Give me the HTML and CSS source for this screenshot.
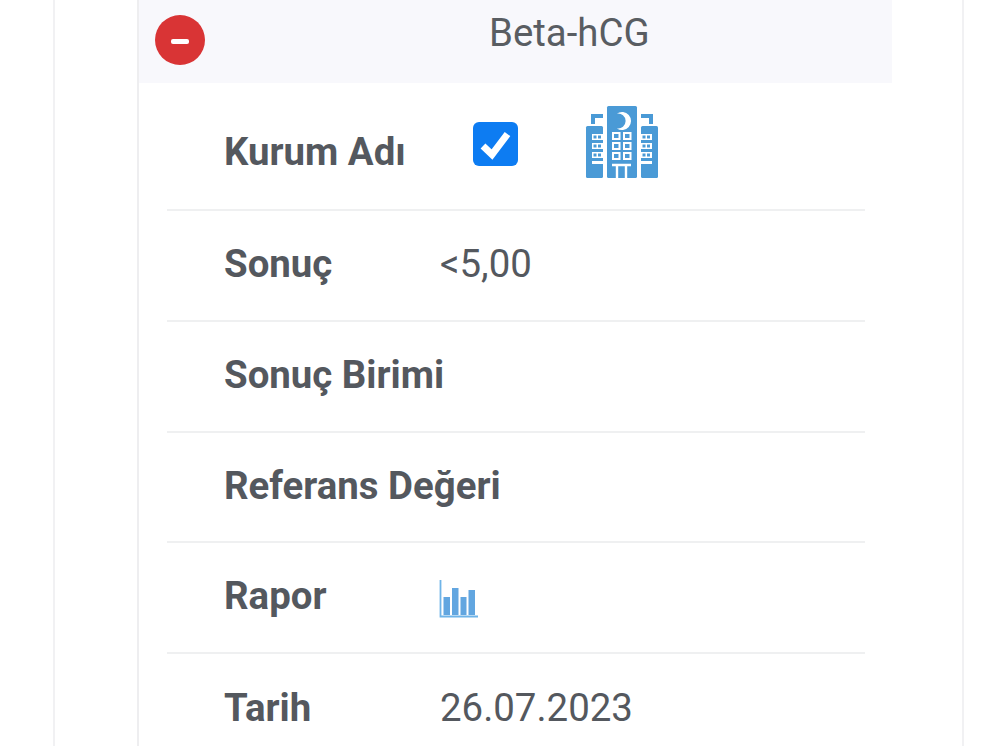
FILE: index.html
```html
<!DOCTYPE html>
<html lang="tr">
<head>
<meta charset="utf-8">
<title>Beta-hCG</title>
<link rel="stylesheet" href="styles.css">
</head>
<body>
<main class="page">
  <section class="card">
    <header class="card-head">
      <span class="collapse" aria-hidden="true"><span class="minus"></span></span>
      <h1 class="title">Beta-hCG</h1>
    </header>
    <div class="rows">
      <div class="row row-first">
        <span class="label label-first">Kurum Adı</span>
        <span class="check">
          <svg viewBox="0 0 44 44" width="44" height="44"><path d="M10 24l9 8.500L34.500 12" fill="none" stroke="#fff" stroke-width="7"/></svg>
        </span>
        <svg class="hospital" viewBox="0 0 73 73" width="73" height="73">
          <g fill="#4a9ad6">
            <rect x="22" y="0" width="30" height="72" rx="1.500"/>
            <rect x="1" y="20" width="17" height="52" rx="1.500"/>
            <rect x="56" y="20" width="17" height="52" rx="1.500"/>
            <path d="M6 18V8h12v4H10v6zM68 18V8H56v4h8v6z"/>
          </g>
          <path d="M31.900 7.600A9 9 0 1 1 31.900 22.400A7.500 7.500 0 1 0 31.900 7.600z" fill="#fff"/>
          <g fill="none" stroke="#fff" stroke-width="2">
            <rect x="28" y="27" width="6.500" height="6"/><rect x="39" y="27" width="6.500" height="6"/>
            <rect x="28" y="37" width="6.500" height="6"/><rect x="39" y="37" width="6.500" height="6"/>
            <rect x="28" y="47" width="6.500" height="6"/><rect x="39" y="47" width="6.500" height="6"/>
            <path d="M27 59h19M32 59v13M41 59v13" stroke-width="2.400"/>
          </g>
          <g fill="#fff">
            <path d="M7 28h11v6H7zM7 37h11v6H7zM7 46h11v6H7zM7 55h11v3H7z"/>
            <path d="M56 28h11v6H56zM56 37h11v6H56zM56 46h11v6H56zM56 55h11v3H56z"/>
          </g>
          <g fill="#4a9ad6">
            <path d="M8.500 29.500h3v3h-3zM13 29.500h3v3h-3zM8.500 38.500h3v3h-3zM13 38.500h3v3h-3zM8.500 47.500h3v3h-3zM13 47.500h3v3h-3z"/>
            <path d="M57.500 29.500h3v3h-3zM62 29.500h3v3h-3zM57.500 38.500h3v3h-3zM62 38.500h3v3h-3zM57.500 47.500h3v3h-3zM62 47.500h3v3h-3z"/>
          </g>
        </svg>
      </div>
      <div class="row">
        <span class="label">Sonuç</span>
        <span class="value">&lt;5,00</span>
      </div>
      <div class="row">
        <span class="label">Sonuç Birimi</span>
      </div>
      <div class="row">
        <span class="label">Referans Değeri</span>
      </div>
      <div class="row">
        <span class="label label-rapor">Rapor</span>
        <svg class="chart" viewBox="0 0 40 40" width="40" height="40">
          <path d="M1.500 1v36.500H39" fill="none" stroke="#6fb4e8" stroke-width="1.800"/>
          <g fill="#62a6e0">
            <rect x="4.500" y="18" width="6.500" height="18"/>
            <rect x="13" y="9" width="6.500" height="27"/>
            <rect x="21.500" y="18" width="6" height="18"/>
            <rect x="29.500" y="11" width="6.500" height="25"/>
          </g>
        </svg>
      </div>
      <div class="row row-last">
        <span class="label label-rapor">Tarih</span>
        <span class="value">26.07.2023</span>
      </div>
    </div>
  </section>
</main>
</body>
</html>
```

FILE: styles.css
```css
* { box-sizing: border-box; }
html, body { margin: 0; height: 100%; }
body {
  background: #fff;
  color: #54585e;
  font-family: Roboto, "Noto Sans", sans-serif;
  overflow: hidden;
}
.page {
  width: 911px;
  height: 746px;
  margin-left: 53px;
  padding-left: 82px;
  border-left: 2px solid #f1f1f3;
  border-right: 2px solid #f1f1f3;
  overflow: hidden;
}
.card {
  width: 755px;
  height: 746px;
  border-left: 2px solid #eeeef0;
}
.card-head {
  display: flex;
  align-items: flex-start;
  height: 83px;
  padding: 15px 0 0 16px;
  background: #f8f8fc;
}
.collapse {
  display: flex;
  align-items: center;
  justify-content: center;
  width: 50px;
  height: 50px;
  flex: none;
  border-radius: 50%;
  background: #d93435;
}
.minus {
  display: block;
  width: 18px;
  height: 5px;
  margin-top: 3px;
  border-radius: 2px;
  background: #fff;
}
.title {
  margin: -4px 0 0 284px;
  font-size: 38.4px;
  line-height: 44px;
  font-weight: 400;
  white-space: nowrap;
  color: #595d62;
}
.rows {
  padding: 0 27px 0 28px;
}
.row {
  display: flex;
  align-items: center;
  height: 110.8px;
  padding-left: 57px;
  border-bottom: 2px solid #eff0f1;
}
.row-first {
  height: 128px;
  padding-top: 16px;
}
.row-last { border-bottom: 0; }
.label {
  width: 216px;
  flex: none;
  margin-top: -3px;
  font-size: 38.4px;
  font-weight: 700;
  white-space: nowrap;
}
.label-first,
.label-rapor { margin-top: -5px; }
.value {
  margin-top: -4px;
  font-size: 38.4px;
  font-weight: 400;
  white-space: nowrap;
}
.check {
  display: block;
  width: 45px;
  height: 44px;
  margin: -20px 0 0 33px;
  border-radius: 6px;
  background: #0d7cf2;
}
.check svg { display: block; }
.hospital {
  display: block;
  margin: -24px 0 0 67px;
}
.chart {
  display: block;
  margin: 3px 0 0 -1px;
}
```
